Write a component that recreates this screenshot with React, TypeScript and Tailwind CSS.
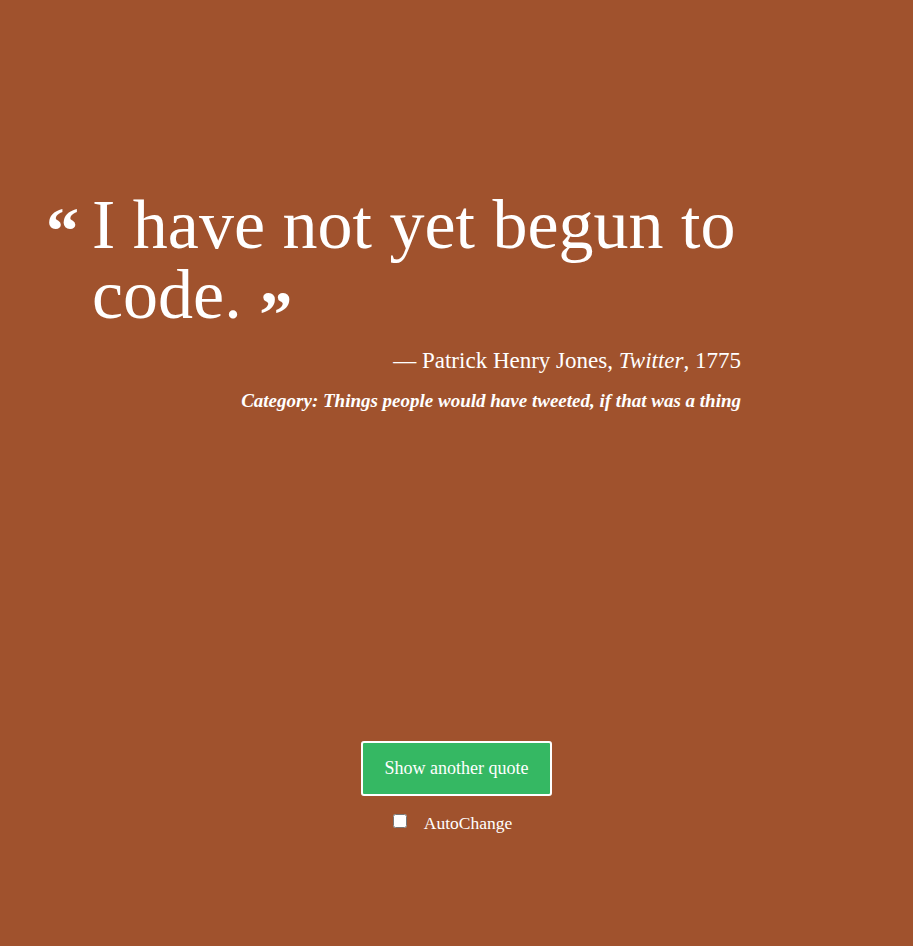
export default function App() {
  return (
    <div
      className="min-h-[946px] w-full bg-[#a0522d] text-white flex flex-col"
      style={{ fontFamily: '"Liberation Serif", "DejaVu Serif", serif' }}
    >
      <div className="pt-[190px] pl-[46px] w-[741px]">
        <div className="flex items-start">
          <span className="font-bold text-[66px] leading-none mt-[8px] w-[46px] shrink-0">“</span>
          <p className="text-[70px] leading-[70px] w-[660px]">
            I have not yet begun to code.{" "}
            <span className="relative top-[18px] font-bold text-[66px] leading-none">”</span>
          </p>
        </div>
        <p className="text-right text-[23px] mt-[14px]">
          — Patrick Henry Jones, <em>Twitter</em>, 1775
        </p>
        <p className="text-right text-[19px] font-bold italic mt-[8px]">
          Category: Things people would have tweeted, if that was a thing
        </p>
      </div>

      <div className="mt-[326px] flex flex-col items-center">
        <button className="w-[191px] h-[55px] bg-[#35b863] border-2 border-white rounded-[3px] text-[18px] text-white">
          Show another quote
        </button>
        <label className="mt-[14px] -ml-[8px] flex items-center gap-[17px] text-[17.5px]">
          <input type="checkbox" className="w-[14px] h-[14px] -mt-[4px]" />
          AutoChange
        </label>
      </div>
    </div>
  );
}
